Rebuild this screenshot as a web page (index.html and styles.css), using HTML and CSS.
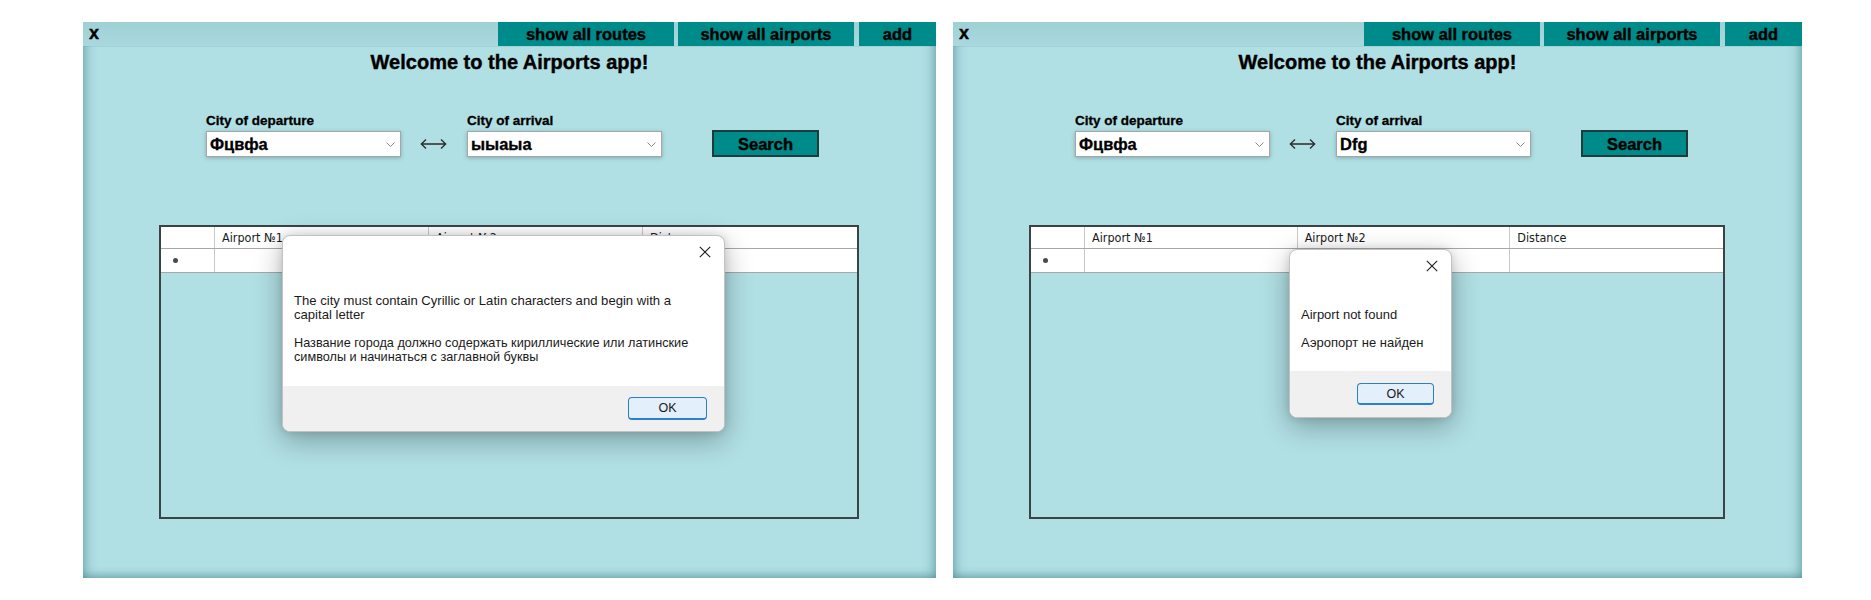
FILE: index.html
```html
<!DOCTYPE html>
<html lang="en">
<head>
<meta charset="utf-8">
<title>Airports app</title>
<link rel="stylesheet" href="styles.css">
</head>
<body>
<main class="screens">

  <section class="window window--left">
    <header class="topbar">
      <span class="close-mark">x</span>
      <nav class="menu">
        <button class="menu-btn menu-btn--routes">show all routes</button>
        <button class="menu-btn menu-btn--airports">show all airports</button>
        <button class="menu-btn menu-btn--add">add</button>
      </nav>
    </header>
    <h1 class="title">Welcome to the Airports app!</h1>
    <div class="search-row">
      <div class="field">
        <span class="field-label">City of departure</span>
        <div class="combo">
          <span class="combo-value">Фцвфа</span>
          <svg class="chevron" width="9" height="5" viewBox="0 0 9 5"><polyline points="0.5,0.5 4.5,4.5 8.5,0.5" fill="none" stroke="#8a8a8a" stroke-width="1"/></svg>
        </div>
      </div>
      <svg class="swap" width="27" height="12" viewBox="0 0 27 12"><path d="M1 6H26M6 1.5L1.3 6L6 10.5M21 1.5L25.7 6L21 10.5" fill="none" stroke="#2b2b2b" stroke-width="1.3"/></svg>
      <div class="field">
        <span class="field-label">City of arrival</span>
        <div class="combo">
          <span class="combo-value">ыыаыа</span>
          <svg class="chevron" width="9" height="5" viewBox="0 0 9 5"><polyline points="0.5,0.5 4.5,4.5 8.5,0.5" fill="none" stroke="#8a8a8a" stroke-width="1"/></svg>
        </div>
      </div>
      <button class="search-btn">Search</button>
    </div>
    <div class="grid">
      <div class="grid-line grid-line--head">
        <div class="cell cell--corner"></div>
        <div class="cell">Airport №1</div>
        <div class="cell">Airport №2</div>
        <div class="cell">Distance</div>
      </div>
      <div class="grid-line">
        <div class="cell cell--rowhead"><span class="new-row-mark"></span></div>
        <div class="cell"></div>
        <div class="cell"></div>
        <div class="cell"></div>
      </div>
    </div>

    <div class="dialog dialog--wide">
      <div class="dialog-head">
        <svg class="dialog-x" width="12" height="12" viewBox="0 0 12 12"><path d="M0.8 0.8L11.2 11.2M11.2 0.8L0.8 11.2" stroke="#1b1b1b" stroke-width="1.1"/></svg>
      </div>
      <div class="dialog-body">
        <p class="dialog-text dialog-text--latin">The city must contain Cyrillic or Latin characters and begin with a<br>capital letter</p>
        <p class="dialog-text">Название города должно содержать кириллические или латинские<br>символы и начинаться с заглавной буквы</p>
      </div>
      <div class="dialog-foot">
        <button class="ok-btn">OK</button>
      </div>
    </div>
  </section>

  <section class="window window--right">
    <header class="topbar">
      <span class="close-mark">x</span>
      <nav class="menu">
        <button class="menu-btn menu-btn--routes">show all routes</button>
        <button class="menu-btn menu-btn--airports">show all airports</button>
        <button class="menu-btn menu-btn--add">add</button>
      </nav>
    </header>
    <h1 class="title">Welcome to the Airports app!</h1>
    <div class="search-row">
      <div class="field">
        <span class="field-label">City of departure</span>
        <div class="combo">
          <span class="combo-value">Фцвфа</span>
          <svg class="chevron" width="9" height="5" viewBox="0 0 9 5"><polyline points="0.5,0.5 4.5,4.5 8.5,0.5" fill="none" stroke="#8a8a8a" stroke-width="1"/></svg>
        </div>
      </div>
      <svg class="swap" width="27" height="12" viewBox="0 0 27 12"><path d="M1 6H26M6 1.5L1.3 6L6 10.5M21 1.5L25.7 6L21 10.5" fill="none" stroke="#2b2b2b" stroke-width="1.3"/></svg>
      <div class="field">
        <span class="field-label">City of arrival</span>
        <div class="combo">
          <span class="combo-value">Dfg</span>
          <svg class="chevron" width="9" height="5" viewBox="0 0 9 5"><polyline points="0.5,0.5 4.5,4.5 8.5,0.5" fill="none" stroke="#8a8a8a" stroke-width="1"/></svg>
        </div>
      </div>
      <button class="search-btn">Search</button>
    </div>
    <div class="grid">
      <div class="grid-line grid-line--head">
        <div class="cell cell--corner"></div>
        <div class="cell">Airport №1</div>
        <div class="cell">Airport №2</div>
        <div class="cell">Distance</div>
      </div>
      <div class="grid-line">
        <div class="cell cell--rowhead"><span class="new-row-mark"></span></div>
        <div class="cell"></div>
        <div class="cell"></div>
        <div class="cell"></div>
      </div>
    </div>

    <div class="dialog dialog--small">
      <div class="dialog-head">
        <svg class="dialog-x" width="12" height="12" viewBox="0 0 12 12"><path d="M0.8 0.8L11.2 11.2M11.2 0.8L0.8 11.2" stroke="#1b1b1b" stroke-width="1.1"/></svg>
      </div>
      <div class="dialog-body">
        <p class="dialog-text">Airport not found</p>
        <p class="dialog-text">Аэропорт не найден</p>
      </div>
      <div class="dialog-foot">
        <button class="ok-btn">OK</button>
      </div>
    </div>
  </section>

</main>
</body>
</html>
```

FILE: styles.css
```css
* {
  box-sizing: border-box;
}

html, body {
  margin: 0;
  padding: 0;
  background: #ffffff;
}

body {
  font-family: "Liberation Sans", Arial, sans-serif;
  color: #000;
}

.screens {
  display: flex;
  gap: 17px;
  padding: 22px 0 0 83px;
}

/* ---------- window ---------- */
.window {
  position: relative;
  height: 556px;
  background: #b0dfe4;
  box-shadow:
    inset 0 -6px 10px -4px rgba(40, 110, 120, 0.45),
    inset 8px 0 12px -6px rgba(40, 110, 120, 0.45),
    inset -8px 0 12px -6px rgba(40, 110, 120, 0.45);
  display: flex;
  flex-direction: column;
}

.window--left {
  width: 853px;
}

.window--right {
  width: 849px;
}

.topbar {
  height: 24px;
  display: flex;
  align-items: stretch;
  background: linear-gradient(to bottom, #9fd0d6, #a9d9df);
  box-shadow: 0 1px 0 rgba(60, 120, 130, 0.12);
}

.close-mark {
  font-weight: 700;
  font-size: 18px;
  line-height: 22px;
  padding-left: 6px;
  -webkit-text-stroke: 0.4px #000;
}

.menu {
  margin-left: auto;
  display: flex;
}

.menu-btn {
  height: 24px;
  margin: 0;
  padding: 0;
  border: none;
  background: #008b8b;
  color: #000;
  font-family: "Liberation Sans", Arial, sans-serif;
  font-weight: 700;
  font-size: 16.5px;
  line-height: 24px;
  text-align: center;
  -webkit-text-stroke: 0.4px #000;
}

.menu-btn--routes {
  width: 176px;
}

.menu-btn--airports {
  width: 176px;
  margin-left: 4px;
}

.menu-btn--add {
  width: 77px;
  margin-left: 5px;
}

.title {
  margin: 5px 0 0;
  font-size: 20px;
  line-height: 23px;
  font-weight: 700;
  text-align: center;
  -webkit-text-stroke: 0.4px #000;
}

/* ---------- search row ---------- */
.search-row {
  display: flex;
  align-items: flex-end;
  margin-top: 40px;
  padding-left: 123px;
}

.window--right .search-row {
  padding-left: 122px;
}

.field {
  display: flex;
  flex-direction: column;
}

.field-label {
  font-weight: 700;
  font-size: 13.5px;
  line-height: 14px;
  margin-bottom: 3px;
  -webkit-text-stroke: 0.3px #000;
}

.combo {
  width: 195px;
  height: 26px;
  background: #fff;
  border: 1px solid #a6a6a6;
  box-shadow: 0 1px 4px rgba(40, 80, 90, 0.35);
  display: flex;
  align-items: center;
  padding: 0 5px 0 3px;
}

.combo-value {
  flex: 1;
  font-weight: 700;
  font-size: 16.5px;
  line-height: 24px;
  -webkit-text-stroke: 0.3px #000;
}

.chevron {
  display: block;
}

.swap {
  display: block;
  margin: 0 20px 7px 19px;
}

.search-btn {
  width: 107px;
  height: 27px;
  margin: 0 0 0 50px;
  padding: 0;
  background: #008b8b;
  border: 2px solid #1e3c3e;
  color: #000;
  font-family: "Liberation Sans", Arial, sans-serif;
  font-weight: 700;
  font-size: 16.5px;
  line-height: 25px;
  -webkit-text-stroke: 0.4px #000;
}

/* ---------- grid ---------- */
.grid {
  margin: 68px 77px 0 76px;
  height: 294px;
  border: 2px solid #3a4446;
  background: #b0dfe4;
}

.grid-line {
  display: grid;
  grid-template-columns: 54px repeat(3, 1fr);
  background: #fff;
  border-bottom: 1px solid #a8a8a8;
}

.grid-line--head {
  height: 22px;
}

.grid-line:not(.grid-line--head) {
  height: 24px;
}

.cell {
  border-right: 1px solid #c9c9c9;
  font-family: "Liberation Sans Narrow", "DejaVu Sans Condensed", "Liberation Sans", sans-serif;
  font-size: 12.5px;
  line-height: 21px;
  padding-left: 7px;
  color: #1a1a1a;
  white-space: nowrap;
  overflow: hidden;
}

.cell:last-child {
  border-right: none;
}

.cell--rowhead {
  display: flex;
  align-items: center;
  padding-left: 12px;
}

.new-row-mark {
  width: 5px;
  height: 5px;
  border-radius: 50%;
  background: #4a4a4a;
}

/* ---------- dialog ---------- */
.dialog {
  position: absolute;
  background: #fff;
  border: 1px solid #c2c2c2;
  border-radius: 8px;
  box-shadow: 0 8px 28px rgba(0, 0, 0, 0.3), 0 0 8px rgba(0, 0, 0, 0.12);
  overflow: hidden;
  display: flex;
  flex-direction: column;
  font-family: "Liberation Sans", Arial, sans-serif;
  color: #1a1a1a;
}

.dialog--wide {
  left: 199px;
  top: 213px;
  width: 443px;
  height: 197px;
}

.dialog--small {
  left: 336px;
  top: 227px;
  width: 163px;
  height: 169px;
}

.dialog-head {
  display: flex;
  justify-content: flex-end;
  padding: 10px 13px 0 0;
  height: 23px;
}

.dialog-x {
  display: block;
}

.dialog-body {
  flex: 1;
  padding: 35px 0 0 11px;
}

.dialog-text {
  margin: 0 0 14px;
  font-size: 12.7px;
  line-height: 14px;
  white-space: nowrap;
}

.dialog-text--latin {
  font-size: 13.1px;
}

.dialog--small .dialog-text {
  font-size: 13px;
}

.dialog-foot {
  height: 45px;
  background: #f0f0f0;
  display: flex;
  justify-content: flex-end;
  align-items: center;
  padding-right: 17px;
}

.dialog--small .dialog-foot {
  height: 46px;
}

.ok-btn {
  width: 79px;
  height: 23px;
  margin: 0;
  padding: 0;
  background: #e3effa;
  border: 1px solid #2b7fd0;
  border-bottom-width: 2px;
  border-radius: 4px;
  font-family: "Liberation Sans", Arial, sans-serif;
  font-size: 12.5px;
  color: #1a1a1a;
}

.dialog--small .ok-btn {
  width: 77px;
  height: 22px;
}
```
